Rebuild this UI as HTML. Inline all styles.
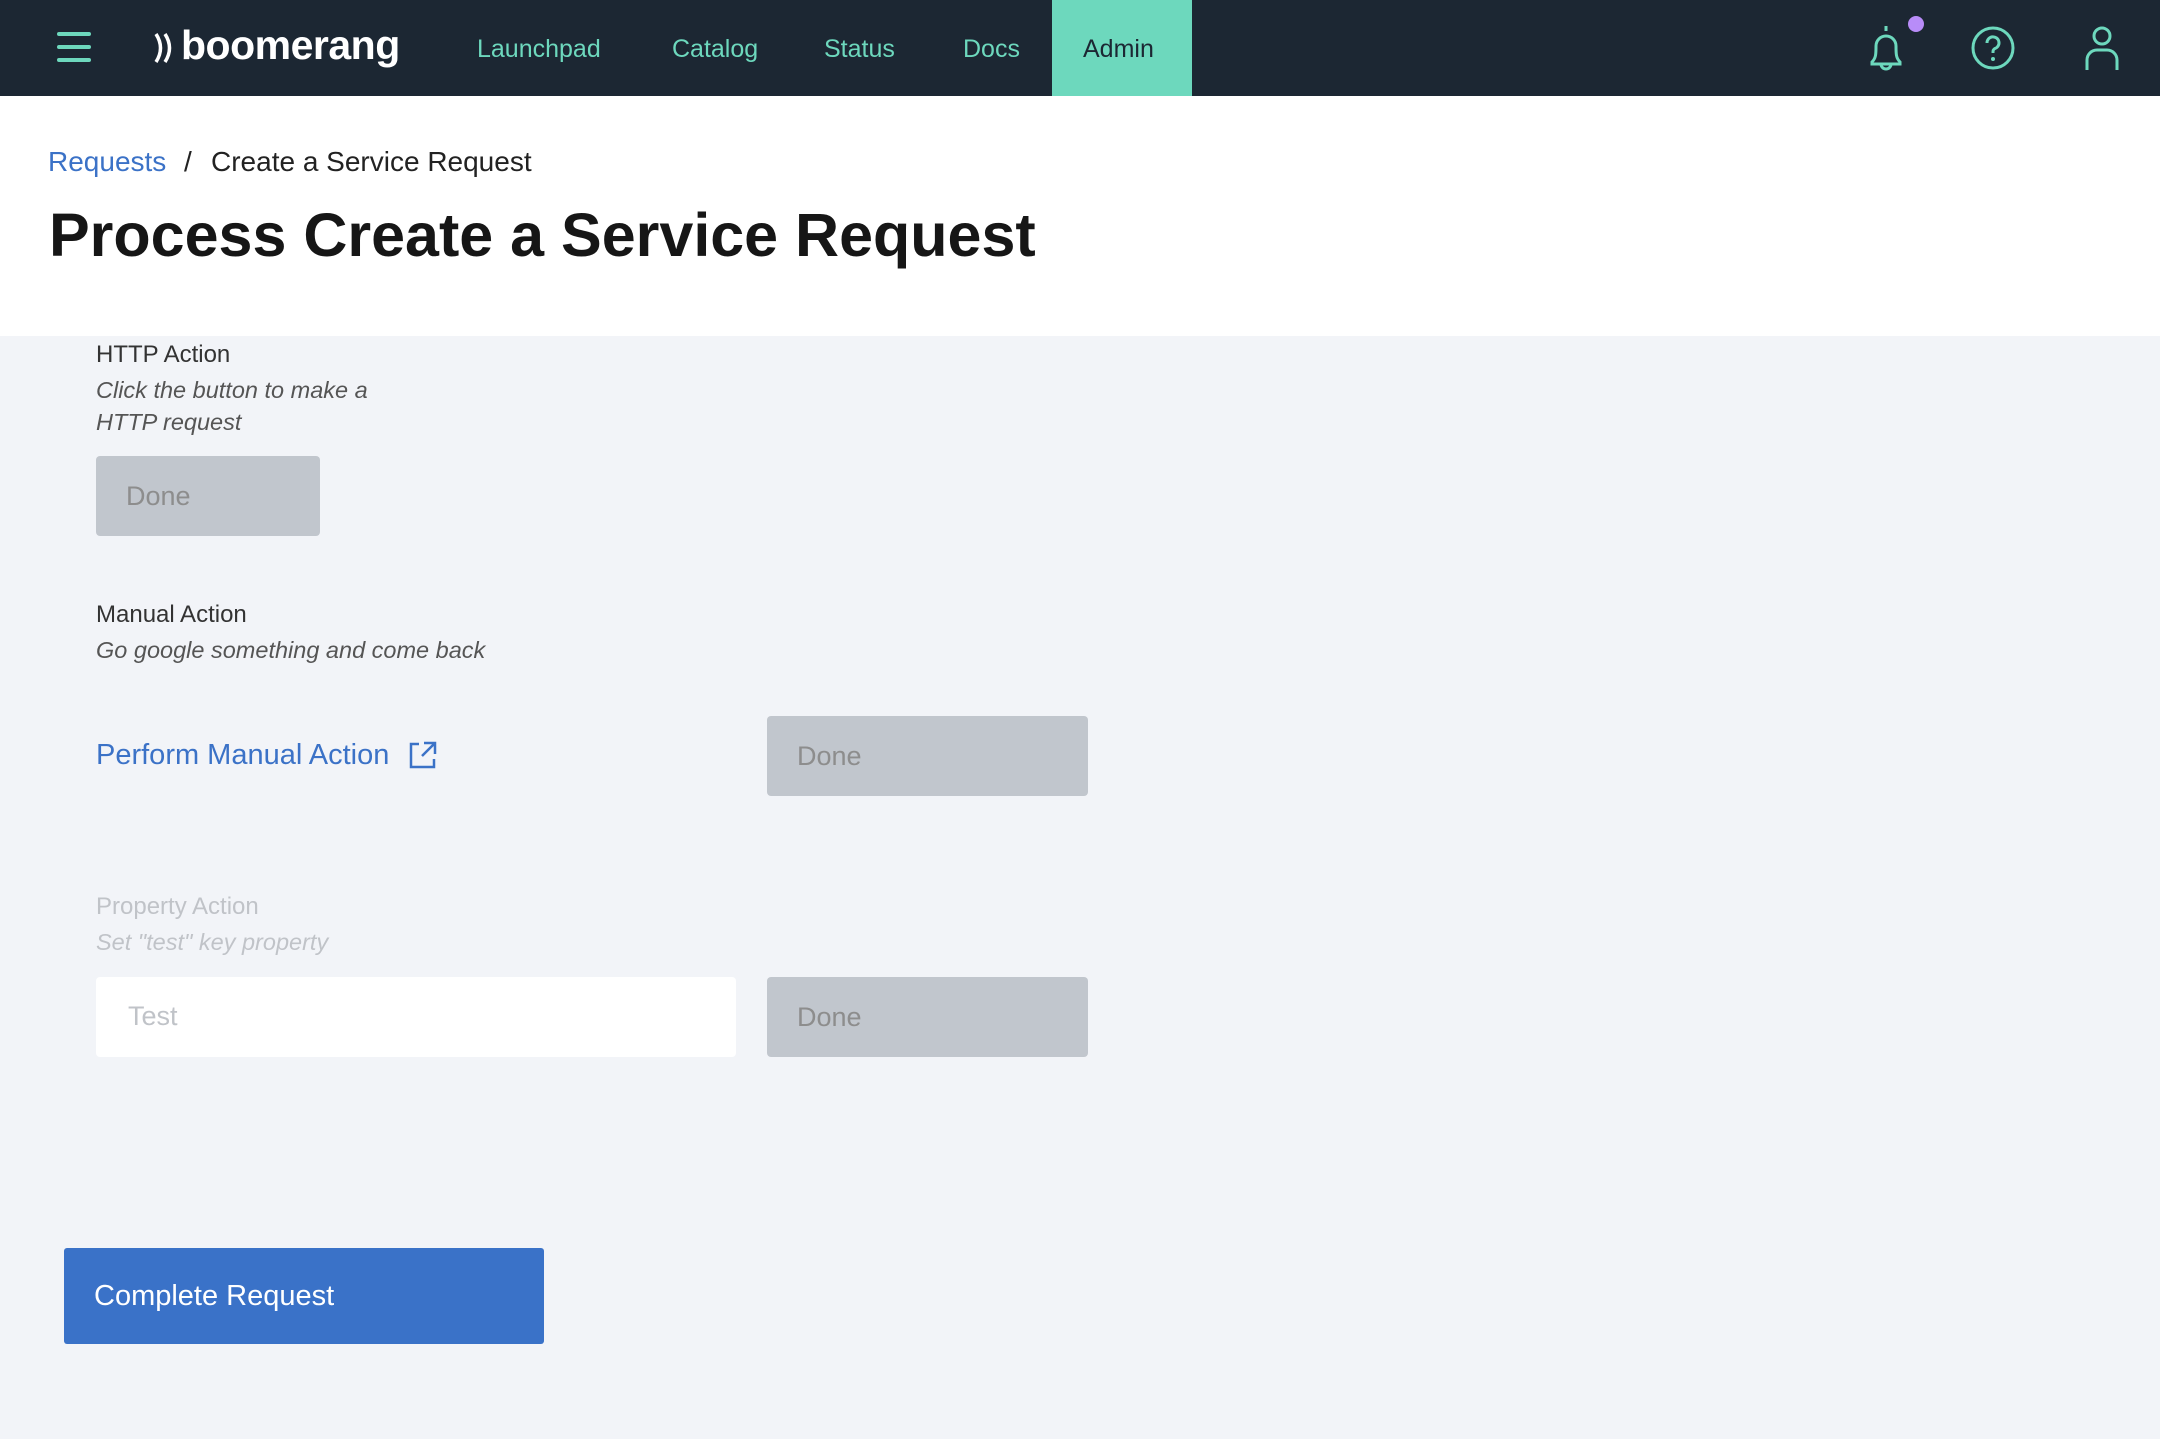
<!DOCTYPE html>
<html><head><meta charset="utf-8"><style>
*{margin:0;padding:0;box-sizing:border-box}
body{width:2160px;height:1439px;background:#f2f4f8;font-family:"Liberation Sans",sans-serif;position:relative;overflow:hidden}
.a{position:absolute;white-space:nowrap}
.hdr{position:absolute;left:0;top:0;width:2160px;height:96px;background:#1c2733}
.nav{color:#6dd8bd;font-size:25px;top:35px}
.top{position:absolute;left:0;top:96px;width:2160px;height:240px;background:#fff}
.lbl{font-size:24px;color:#333}
.it{font-size:23.5px;font-style:italic;color:#555}
.btn{position:absolute;background:#c1c6cd;border-radius:4px;color:#8d8d8d;font-size:27px;padding-left:30px;display:flex;align-items:center}
</style></head><body>
<div class="hdr"></div>
<svg class="a" style="left:57px;top:32px" width="34" height="30"><g fill="#6dd8bd"><rect x="0" y="0" width="34" height="4" rx="2"/><rect x="0" y="13" width="34" height="4" rx="2"/><rect x="0" y="26" width="34" height="4" rx="2"/></g></svg>
<svg class="a" style="left:152px;top:32px" width="28" height="34"><path d="M4 2 Q13 16 4 30 M13 2 Q22 16 13 30" stroke="#fff" stroke-width="3.5" fill="none"/></svg>
<div class="a" style="left:181px;top:22px;color:#fff;font-size:41px;font-weight:bold;letter-spacing:-0.5px">boomerang</div>
<div class="a nav" style="left:477px">Launchpad</div>
<div class="a nav" style="left:672px">Catalog</div>
<div class="a nav" style="left:824px">Status</div>
<div class="a nav" style="left:963px">Docs</div>
<div class="a" style="left:1052px;top:0;width:140px;height:96px;background:#6dd8bd"></div>
<div class="a nav" style="left:1083px;color:#1c2733">Admin</div>
<svg class="a" style="left:1862px;top:22px" width="48" height="50" viewBox="0 0 48 50"><path d="M24 4v5 M10 40c4-4 4-8 4-16a10 10 0 0 1 20 0c0 8 0 12 4 16v2H10z M19 42a5 5 0 0 0 10 0" stroke="#6dd8bd" stroke-width="3" fill="none"/></svg>
<div class="a" style="left:1908px;top:16px;width:16px;height:16px;border-radius:50%;background:#b88cf8"></div>
<svg class="a" style="left:1970px;top:25px" width="46" height="46" viewBox="0 0 46 46"><circle cx="23" cy="23" r="20" stroke="#6dd8bd" stroke-width="3" fill="none"/><path d="M17 18a6 6 0 1 1 8 5.5c-2 1-2 2-2 4.5" stroke="#6dd8bd" stroke-width="3" fill="none"/><circle cx="23" cy="34" r="2" fill="#6dd8bd"/></svg>
<svg class="a" style="left:2085px;top:26px" width="34" height="44" viewBox="0 0 34 44"><circle cx="17" cy="10" r="8" stroke="#6dd8bd" stroke-width="3" fill="none"/><path d="M2 44V34a10 10 0 0 1 10-10h10a10 10 0 0 1 10 10v10" stroke="#6dd8bd" stroke-width="3" fill="none"/></svg>
<div class="top"></div>
<div class="a" style="left:48px;top:146px;font-size:28px;color:#3b72c7">Requests</div>
<div class="a" style="left:184px;top:146px;font-size:28px;color:#222">/</div>
<div class="a" style="left:211px;top:146px;font-size:28px;color:#222">Create a Service Request</div>
<div class="a" style="left:49px;top:200px;font-size:61px;font-weight:bold;color:#161616">Process Create a Service Request</div>
<div class="a lbl" style="left:96px;top:341px">HTTP Action</div>
<div class="a it" style="left:96px;top:377px">Click the button to make a</div>
<div class="a it" style="left:96px;top:409px">HTTP request</div>
<div class="btn" style="left:96px;top:456px;width:224px;height:80px">Done</div>
<div class="a lbl" style="left:96px;top:601px">Manual Action</div>
<div class="a it" style="left:96px;top:637px">Go google something and come back</div>
<div class="a" style="left:96px;top:739px;font-size:29px;color:#3b72c7">Perform Manual Action</div>
<svg class="a" style="left:409px;top:741px" width="28" height="28" viewBox="0 0 28 28"><path d="M10 3H2v23h23v-8 M15 2h11v11 M26 2L13 15" stroke="#3b72c7" stroke-width="2.5" fill="none"/></svg>
<div class="btn" style="left:767px;top:716px;width:321px;height:80px">Done</div>
<div class="a lbl" style="left:96px;top:893px;color:#c0c3c8">Property Action</div>
<div class="a it" style="left:96px;top:929px;color:#c0c3c8">Set "test" key property</div>
<div class="a" style="left:96px;top:977px;width:640px;height:80px;background:#fff;border-radius:4px"></div>
<div class="a" style="left:128px;top:1001px;font-size:27px;color:#c0c3c8">Test</div>
<div class="btn" style="left:767px;top:977px;width:321px;height:80px">Done</div>
<div class="a" style="left:64px;top:1248px;width:480px;height:96px;background:#3a72c8;border-radius:3px"></div>
<div class="a" style="left:94px;top:1280px;font-size:29px;color:#fff">Complete Request</div>
</body></html>
